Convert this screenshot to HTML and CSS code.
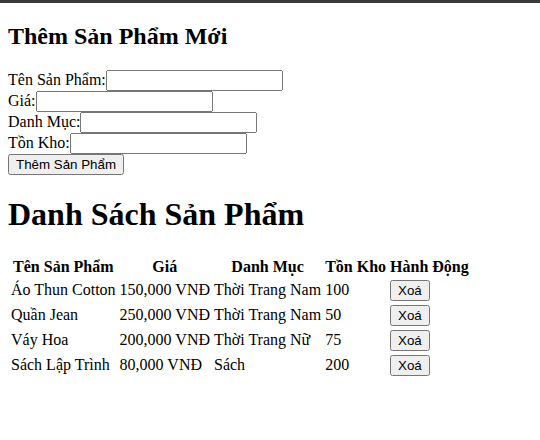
FILE: index.html
```html
<!DOCTYPE html>
<html lang="vi">
<head>
<meta charset="utf-8">
<title>Quản Lý Sản Phẩm</title>
<link rel="stylesheet" href="styles.css">
</head>
<body>
<h2 class="form-title">Thêm Sản Phẩm Mới</h2>
<form class="add-form">
<label>Tên Sản Phẩm:</label><input type="text" class="field"><br>
<label>Giá:</label><input type="text" class="field"><br>
<label>Danh Mục:</label><input type="text" class="field"><br>
<label>Tồn Kho:</label><input type="text" class="field"><br>
<button type="button" class="btn">Thêm Sản Phẩm</button>
</form>
<h1 class="list-title">Danh Sách Sản Phẩm</h1>
<table class="products">
<thead>
<tr><th>Tên Sản Phẩm</th><th>Giá</th><th>Danh Mục</th><th>Tồn Kho</th><th>Hành Động</th></tr>
</thead>
<tbody>
<tr><td>Áo Thun Cotton</td><td>150,000 VNĐ</td><td>Thời Trang Nam</td><td>100</td><td><button type="button" class="btn">Xoá</button></td></tr>
<tr><td>Quần Jean</td><td>250,000 VNĐ</td><td>Thời Trang Nam</td><td>50</td><td><button type="button" class="btn">Xoá</button></td></tr>
<tr><td>Váy Hoa</td><td>200,000 VNĐ</td><td>Thời Trang Nữ</td><td>75</td><td><button type="button" class="btn">Xoá</button></td></tr>
<tr><td>Sách Lập Trình</td><td>80,000 VNĐ</td><td>Sách</td><td>200</td><td><button type="button" class="btn">Xoá</button></td></tr>
</tbody>
</table>
</body>
</html>
```
FILE: styles.css
```css
html {
  border-top: 3px solid #3a3a3a;
}
body {
  margin: 0;
  padding: 0 8px 8px;
  display: flow-root;
  font-family: "Liberation Serif", serif;
  color: #000;
  background: #fff;
}
.form-title {
  margin: 19.92px 0;
}
.field {
  box-sizing: border-box;
  width: 177px;
  font-family: "Liberation Sans", Arial, sans-serif;
}
.btn {
  font-family: "Liberation Sans", Arial, sans-serif;
}
```
